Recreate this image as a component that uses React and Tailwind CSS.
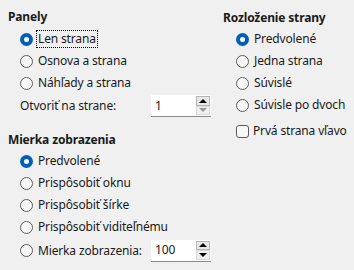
import React, { useState } from "react";

const font = { fontFamily: '"Noto Sans", "Open Sans", sans-serif' };

function Radio({ checked, label, focused, onClick }) {
  return (
    <div className="flex items-center h-[22px] cursor-default" onClick={onClick}>
      {checked ? (
        <span className="w-[13px] h-[13px] rounded-full bg-[#005fb8] flex items-center justify-center shrink-0">
          <span className="w-[5px] h-[5px] rounded-full bg-white" />
        </span>
      ) : (
        <span className="w-[13px] h-[13px] rounded-full border border-[#5c5c5c] bg-[#f7f7f7] shrink-0" />
      )}
      <span
        className={
          "ml-[3px] px-[1px] leading-[16px] " +
          (focused ? "border border-dotted border-black" : "border border-transparent")
        }
      >
        {label}
      </span>
    </div>
  );
}

function Spin({ value, downDisabled }) {
  return (
    <div className="flex w-[60px] h-[22px] bg-white border-b border-[#8a8a8a]">
      <div className="flex-1 pl-[4px] flex items-center">{value}</div>
      <div className="flex flex-col w-[15px] py-[1px] pr-[1px]">
        <div className="flex-1 border border-[#b5b5b5] bg-[#e8e8e8] flex items-center justify-center">
          <span className="w-0 h-0 border-l-[4px] border-r-[4px] border-b-[4px] border-l-transparent border-r-transparent border-b-black" />
        </div>
        <div className="flex-1 border border-[#d9d9d9] bg-[#f0f0f0] flex items-center justify-center">
          <span
            className={
              "w-0 h-0 border-l-[4px] border-r-[4px] border-t-[4px] border-l-transparent border-r-transparent " +
              (downDisabled ? "border-t-[#9a9a9a]" : "border-t-black")
            }
          />
        </div>
      </div>
    </div>
  );
}

export default function App() {
  const [panel, setPanel] = useState(0);
  const [zoom, setZoom] = useState(0);
  const [layout, setLayout] = useState(0);

  const panels = ["Len strana", "Osnova a strana", "Náhľady a strana"];
  const zooms = ["Predvolené", "Prispôsobiť oknu", "Prispôsobiť šírke", "Prispôsobiť viditeľnému"];
  const layouts = ["Predvolené", "Jedna strana", "Súvislé", "Súvisle po dvoch"];

  return (
    <div
      className="w-[354px] h-[270px] bg-[#f0f0f0] text-[12px] tracking-[-0.15px] text-[#1a1a1a] flex overflow-hidden"
      style={font}
    >
      <div className="w-[215px] pl-[8px] pt-[9px]">
        <div className="font-bold h-[16px] leading-[16px]">Panely</div>
        <div className="pl-[12px] mt-[3px]">
          {panels.map((p, i) => (
            <Radio key={p} label={p} checked={panel === i} focused={i === 0} onClick={() => setPanel(i)} />
          ))}
          <div className="flex items-center mt-[1px] h-[22px]">
            <span className="w-[131px]">Otvoriť na strane:</span>
            <Spin value="1" downDisabled />
          </div>
        </div>
        <div className="font-bold h-[16px] leading-[16px] mt-[15px]">Mierka zobrazenia</div>
        <div className="pl-[12px] mt-[2px]">
          {zooms.map((z, i) => (
            <Radio key={z} label={z} checked={zoom === i} onClick={() => setZoom(i)} />
          ))}
          <div className="flex items-center mt-[2px] h-[21px]">
            <div className="w-[131px]">
              <Radio label="Mierka zobrazenia:" checked={zoom === 4} onClick={() => setZoom(4)} />
            </div>
            <Spin value="100" />
          </div>
        </div>
      </div>
      <div className="pl-[8px] pt-[10px]">
        <div className="font-bold h-[16px] leading-[16px]">Rozloženie strany</div>
        <div className="pl-[13px] mt-[2px]">
          {layouts.map((l, i) => (
            <Radio key={l} label={l} checked={layout === i} onClick={() => setLayout(i)} />
          ))}
          <div className="flex items-center h-[22px] mt-[4px]">
            <span className="w-[13px] h-[13px] rounded-[3px] border border-[#5c5c5c] bg-[#f7f7f7] shrink-0" />
            <span className="ml-[4px]">Prvá strana vľavo</span>
          </div>
        </div>
      </div>
    </div>
  );
}
